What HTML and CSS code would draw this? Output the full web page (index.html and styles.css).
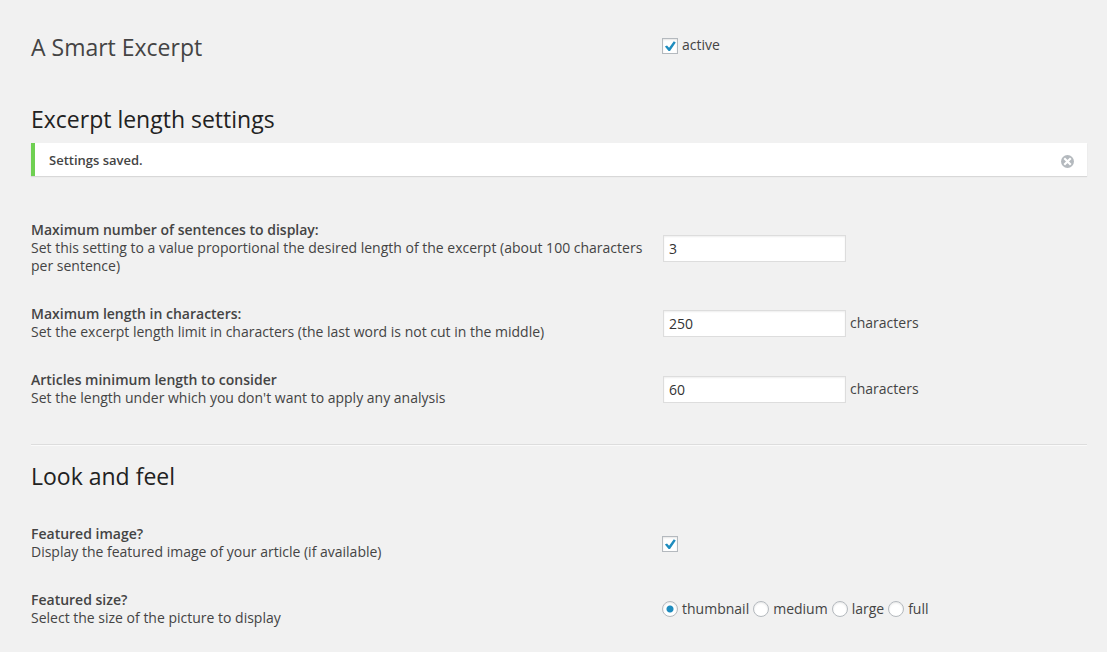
FILE: index.html
```html
<!DOCTYPE html>
<html lang="en">
<head>
<meta charset="utf-8">
<title>A Smart Excerpt</title>
<link rel="stylesheet" href="styles.css">
</head>
<body>
<form class="page">
  <header class="row head">
    <h1 class="title">A Smart Excerpt</h1>
    <label class="choice"><input type="checkbox" class="check" checked><span>active</span></label>
  </header>

  <section class="section">
    <h2 class="heading">Excerpt length settings</h2>
    <div class="notice" role="status">
      <strong>Settings saved.</strong>
      <button type="button" class="dismiss" aria-label="Dismiss">
        <svg viewBox="0 0 12 12" width="13" height="13"><circle cx="6" cy="6" r="6" fill="#b4b9be"/><path d="M3 3l6 6M9 3l-6 6" stroke="#fff" stroke-width="2"/></svg>
      </button>
    </div>
    <div class="rows">
      <div class="row">
        <label class="info" for="sentences"><b>Maximum number of sentences to display:</b><span>Set this setting to a value proportional the desired length of the excerpt (about 100 characters per sentence)</span></label>
        <div class="control"><input id="sentences" class="field" type="text" value="3"></div>
      </div>
      <div class="row">
        <label class="info" for="length"><b>Maximum length in characters:</b><span>Set the excerpt length limit in characters (the last word is not cut in the middle)</span></label>
        <div class="control"><input id="length" class="field" type="text" value="250"><span>characters</span></div>
      </div>
      <div class="row">
        <label class="info" for="minimum"><b>Articles minimum length to consider</b><span>Set the length under which you don't want to apply any analysis</span></label>
        <div class="control"><input id="minimum" class="field" type="text" value="60"><span>characters</span></div>
      </div>
    </div>
  </section>

  <hr class="rule">

  <section class="section">
    <h2 class="heading">Look and feel</h2>
    <div class="rows look">
      <div class="row">
        <label class="info" for="featured"><b>Featured image?</b><span>Display the featured image of your article (if available)</span></label>
        <div class="control"><input id="featured" type="checkbox" class="check" checked></div>
      </div>
      <div class="row" role="radiogroup" aria-labelledby="size">
        <div class="info" id="size"><b>Featured size?</b><span>Select the size of the picture to display</span></div>
        <div class="control">
          <label class="choice"><input type="radio" class="radio" name="size" checked><span>thumbnail</span></label>
          <label class="choice"><input type="radio" class="radio" name="size"><span>medium</span></label>
          <label class="choice"><input type="radio" class="radio" name="size"><span>large</span></label>
          <label class="choice"><input type="radio" class="radio" name="size"><span>full</span></label>
        </div>
      </div>
    </div>
  </section>
</form>
</body>
</html>
```
FILE: styles.css
```css
* { box-sizing: border-box; }
body {
  margin: 0;
  background: #f1f1f1;
  color: #444;
  font: 14px/18px "Open Sans", sans-serif;
}
.page { padding: 31px 20px 24px 31px; }
.row {
  display: grid;
  grid-template-columns: 1.485fr 1fr;
  align-items: center;
}
.row > :first-child { padding-right: 16px; }
.head { align-items: start; }
.head .choice { padding-top: 5px; }
.title, .heading {
  margin: 0;
  font-size: 23px;
  font-weight: 400;
  line-height: 32px;
}
.heading { color: #222; }
.section { padding-top: 40px; }
.notice {
  display: flex;
  align-items: center;
  justify-content: space-between;
  min-height: 33px;
  margin-top: 8px;
  padding: 0 13px 0 14px;
  border-left: 4px solid #6fd052;
  background: #fff;
  box-shadow: 0 1px 1px rgba(0, 0, 0, .1);
  font-size: 13px;
}
.notice strong { font-weight: 600; }
.dismiss {
  display: flex;
  margin-top: 4px;
  padding: 0;
  border: 0;
  background: none;
}
.rows {
  display: grid;
  gap: 30px;
  padding-top: 45px;
}
.look { padding-top: 33px; }
.info b, .info span { display: block; }
.info b { font-weight: 600; }
.control {
  display: flex;
  align-items: center;
  gap: 4px;
}
.choice {
  display: flex;
  align-items: center;
  gap: 4px;
}
.field {
  width: 183px;
  height: 27px;
  margin-left: 1px;
  padding: 0 5px;
  border: 1px solid #ddd;
  background: #fff;
  color: #333;
  font: inherit;
  box-shadow: inset 0 1px 2px rgba(0, 0, 0, .07);
}
.check, .radio {
  appearance: none;
  width: 16px;
  height: 16px;
  margin: 0;
  border: 1px solid #b4b9be;
  background: #fff;
  box-shadow: inset 0 1px 2px rgba(0, 0, 0, .1);
}
.check { margin-top: 2px; }
.check:checked {
  background: #fff url("data:image/svg+xml,%3Csvg xmlns='http://www.w3.org/2000/svg' viewBox='0 0 14 14'%3E%3Cpath d='M1.9 7.6l2.1-1.2 2.1 2.4L10.8 2.3l2 1.1L7 12H5.6z' fill='%231e8cbe'/%3E%3C/svg%3E");
}
.radio { border-radius: 50%; }
.radio:checked { background: radial-gradient(circle, #1e8cbe 3px, #fff 4px); }
.rule {
  margin: 37px 0 0;
  border: 0;
  border-top: 1px solid #ddd;
  border-bottom: 1px solid #fafafa;
}
.rule + .section { padding-top: 14px; }
```
